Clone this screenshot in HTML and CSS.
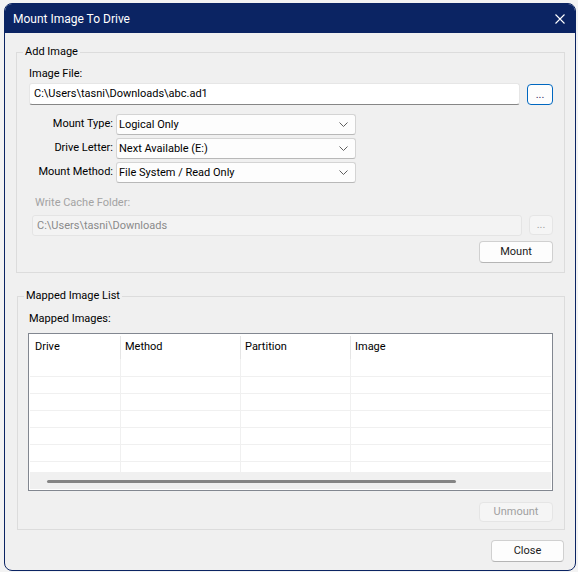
FILE: index.html
```html
<!DOCTYPE html>
<html lang="en">
<head>
    <meta charset="UTF-8">
    <title>Mount Image To Drive</title>
    <link rel="stylesheet" href="styles.css">
</head>
<body>
    <div class="dialog">
        <div class="titlebar">
            <span class="title">Mount Image To Drive</span>
            <svg class="close-x" width="10" height="10" viewBox="0 0 10 10">
                <path d="M0.5 0.5 L9.5 9.5 M9.5 0.5 L0.5 9.5" stroke="#fff" stroke-width="1.1" fill="none"/>
            </svg>
        </div>

        <div class="dialog-body">
            <!-- Add Image -->
            <div class="group add-group">
                <span class="group-title">Add Image</span>
                <div class="label">Image File:</div>
                <div class="file-row">
                    <div class="textbox">C:\Users\tasni\Downloads\abc.ad1</div>
                    <button class="btn browse-btn">...</button>
                </div>

                <div class="fields">
                    <div class="field">
                        <span class="field-label">Mount Type:</span>
                        <div class="combo">
                            <span>Logical Only</span>
                            <svg width="9" height="5" viewBox="0 0 9 5"><path d="M0.5 0.5 L4.5 4.5 L8.5 0.5" stroke="#5f5f5f" fill="none"/></svg>
                        </div>
                    </div>
                    <div class="field">
                        <span class="field-label">Drive Letter:</span>
                        <div class="combo">
                            <span>Next Available (E:)</span>
                            <svg width="9" height="5" viewBox="0 0 9 5"><path d="M0.5 0.5 L4.5 4.5 L8.5 0.5" stroke="#5f5f5f" fill="none"/></svg>
                        </div>
                    </div>
                    <div class="field">
                        <span class="field-label">Mount Method:</span>
                        <div class="combo">
                            <span>File System / Read Only</span>
                            <svg width="9" height="5" viewBox="0 0 9 5"><path d="M0.5 0.5 L4.5 4.5 L8.5 0.5" stroke="#5f5f5f" fill="none"/></svg>
                        </div>
                    </div>
                </div>

                <div class="label cache-label">Write Cache Folder:</div>
                <div class="cache-row">
                    <div class="textbox disabled">C:\Users\tasni\Downloads</div>
                    <button class="btn cache-btn" disabled>...</button>
                </div>

                <div class="actions">
                    <button class="btn mount-btn">Mount</button>
                </div>
            </div>

            <!-- Mapped Image List -->
            <div class="group list-group">
                <span class="group-title">Mapped Image List</span>
                <div class="label list-label">Mapped Images:</div>
                <div class="listview">
                    <div class="list-header">
                        <div class="col">Drive</div>
                        <div class="col">Method</div>
                        <div class="col">Partition</div>
                        <div class="col">Image</div>
                    </div>
                    <div class="list-body">
                        <div class="list-row"><div class="cell"></div><div class="cell"></div><div class="cell"></div><div class="cell"></div></div>
                        <div class="list-row"><div class="cell"></div><div class="cell"></div><div class="cell"></div><div class="cell"></div></div>
                        <div class="list-row"><div class="cell"></div><div class="cell"></div><div class="cell"></div><div class="cell"></div></div>
                        <div class="list-row"><div class="cell"></div><div class="cell"></div><div class="cell"></div><div class="cell"></div></div>
                        <div class="list-row"><div class="cell"></div><div class="cell"></div><div class="cell"></div><div class="cell"></div></div>
                        <div class="list-row"><div class="cell"></div><div class="cell"></div><div class="cell"></div><div class="cell"></div></div>
                        <div class="list-row"><div class="cell"></div><div class="cell"></div><div class="cell"></div><div class="cell"></div></div>
                    </div>
                    <div class="hscroll">
                        <div class="hscroll-thumb"></div>
                    </div>
                </div>
                <div class="actions">
                    <button class="btn unmount-btn" disabled>Unmount</button>
                </div>
            </div>

            <div class="footer">
                <button class="btn close-btn">Close</button>
            </div>
        </div>
    </div>
</body>
</html>
```

FILE: styles.css
```css
* {
    margin: 0;
    padding: 0;
    box-sizing: border-box;
}

body {
    background-color: #f3f3f3;
    font-family: Roboto, "Noto Sans", sans-serif;
    font-size: 11px;
    color: #000;
}

.dialog {
    width: 572px;
    height: 568px;
    margin: 3px 0 0 4px;
    background-color: #f0f0f0;
    border: 1px solid #0b2463;
    border-radius: 8px;
    overflow: hidden;
    display: flex;
    flex-direction: column;
}

.titlebar {
    height: 29px;
    background-color: #0b2463;
    color: #fff;
    display: flex;
    align-items: center;
    justify-content: space-between;
    padding: 0 10px 0 8px;
    flex-shrink: 0;
}

.title {
    font-size: 12px;
    line-height: 16px;
}

.close-x {
    display: block;
}

.dialog-body {
    padding: 0 10px 0 11px;
    display: flex;
    flex-direction: column;
}

/* group boxes */
.group {
    position: relative;
    border: 1px solid #dcdcdc;
}

.group-title {
    position: absolute;
    top: -9px;
    left: 6px;
    padding: 0 2px;
    background-color: #f0f0f0;
    line-height: 16px;
}

.label {
    line-height: 16px;
    white-space: nowrap;
}

.add-group {
    margin-top: 19px;
    padding: 13px 11px 9px 12px;
}

.list-group {
    margin-top: 23px;
    margin-left: 1px;
    padding: 14px 11px 7px 10px;
}

/* text boxes */
.file-row,
.cache-row {
    display: flex;
    align-items: flex-start;
}

.file-row {
    margin-top: 1px;
}

.textbox {
    height: 22px;
    width: 491px;
    background-color: #fff;
    border: 1px solid #e6e6e6;
    border-bottom-color: #868686;
    border-radius: 3px;
    padding: 0 4px;
    line-height: 20px;
    white-space: nowrap;
}

.textbox.disabled {
    height: 21px;
    width: 490px;
    margin-left: 3px;
    background-color: #f3f3f3;
    border: 1px solid #e4e4e4;
    color: #8a8a8a;
    line-height: 19px;
}

/* buttons */
.btn {
    font-family: inherit;
    font-size: 11px;
    color: #1a1a1a;
    background-color: #fdfdfd;
    border: 1px solid #d0d0d0;
    border-bottom-color: #b5b5b5;
    border-radius: 4px;
    height: 22px;
    line-height: 18px;
}

.btn:disabled {
    background-color: #f5f5f5;
    border-color: #e5e5e5;
    color: #a0a0a0;
}

.browse-btn {
    width: 26px;
    height: 21px;
    margin-left: 7px;
    margin-top: 1px;
    border-color: #0067c0;
    border-bottom-color: #0067c0;
    color: #3c1d66;
    line-height: 14px;
}

.cache-btn {
    width: 24px;
    height: 20px;
    margin-left: 7px;
    line-height: 14px;
}

.actions {
    display: flex;
    justify-content: flex-end;
}

.mount-btn {
    width: 74px;
    margin-top: 5px;
}

.unmount-btn {
    width: 74px;
    height: 20px;
    margin-top: 11px;
}

/* combo fields */
.fields {
    margin-top: 9px;
    display: flex;
    flex-direction: column;
    gap: 3px;
}

.field {
    display: flex;
    align-items: center;
    gap: 3px;
}

.field-label {
    width: 84px;
    text-align: right;
    line-height: 16px;
    margin-top: -2px;
    white-space: nowrap;
}

.combo {
    width: 240px;
    height: 21px;
    background-color: #fdfdfd;
    border: 1px solid #d4d4d4;
    border-bottom-color: #b8b8b8;
    border-radius: 3px;
    display: flex;
    align-items: center;
    justify-content: space-between;
    padding: 0 7px 0 2px;
}

.combo svg {
    display: block;
}

.cache-label {
    margin-top: 12px;
    margin-left: 6px;
    color: #a3a3a3;
}

.cache-row {
    margin-top: 4px;
}

/* list view */
.list-label {
    margin-left: 1px;
}

.listview {
    margin-top: 6px;
    width: 525px;
    height: 158px;
    border: 1px solid #828790;
    padding: 1px;
    background-color: #fff;
    display: flex;
    flex-direction: column;
}

.list-header,
.list-row {
    display: grid;
    grid-template-columns: 90px 120px 110px 1fr;
}

.list-header {
    height: 24px;
}

.list-header .col {
    padding: 4px 0 0 5px;
    line-height: 16px;
}

.list-header .col + .col {
    border-left: 1px solid #e5e5e5;
    margin-top: 1px;
    padding: 3px 0 0 4px;
}

.list-body {
    height: 113px;
    overflow: hidden;
}

.list-row {
    height: 17px;
    border-top: 1px solid #f0f0f0;
}

.list-row:first-child {
    border-top: none;
}

.cell + .cell {
    border-left: 1px solid #f0f0f0;
}

.hscroll {
    height: 17px;
    background-color: #f0f0f0;
    padding: 8px 0 0 17px;
}

.hscroll-thumb {
    width: 409px;
    height: 3px;
    border-radius: 2px;
    background-color: #858585;
}

.footer {
    display: flex;
    justify-content: flex-end;
}

.close-btn {
    width: 73px;
    margin-top: 10px;
    margin-right: 1px;
}
```
